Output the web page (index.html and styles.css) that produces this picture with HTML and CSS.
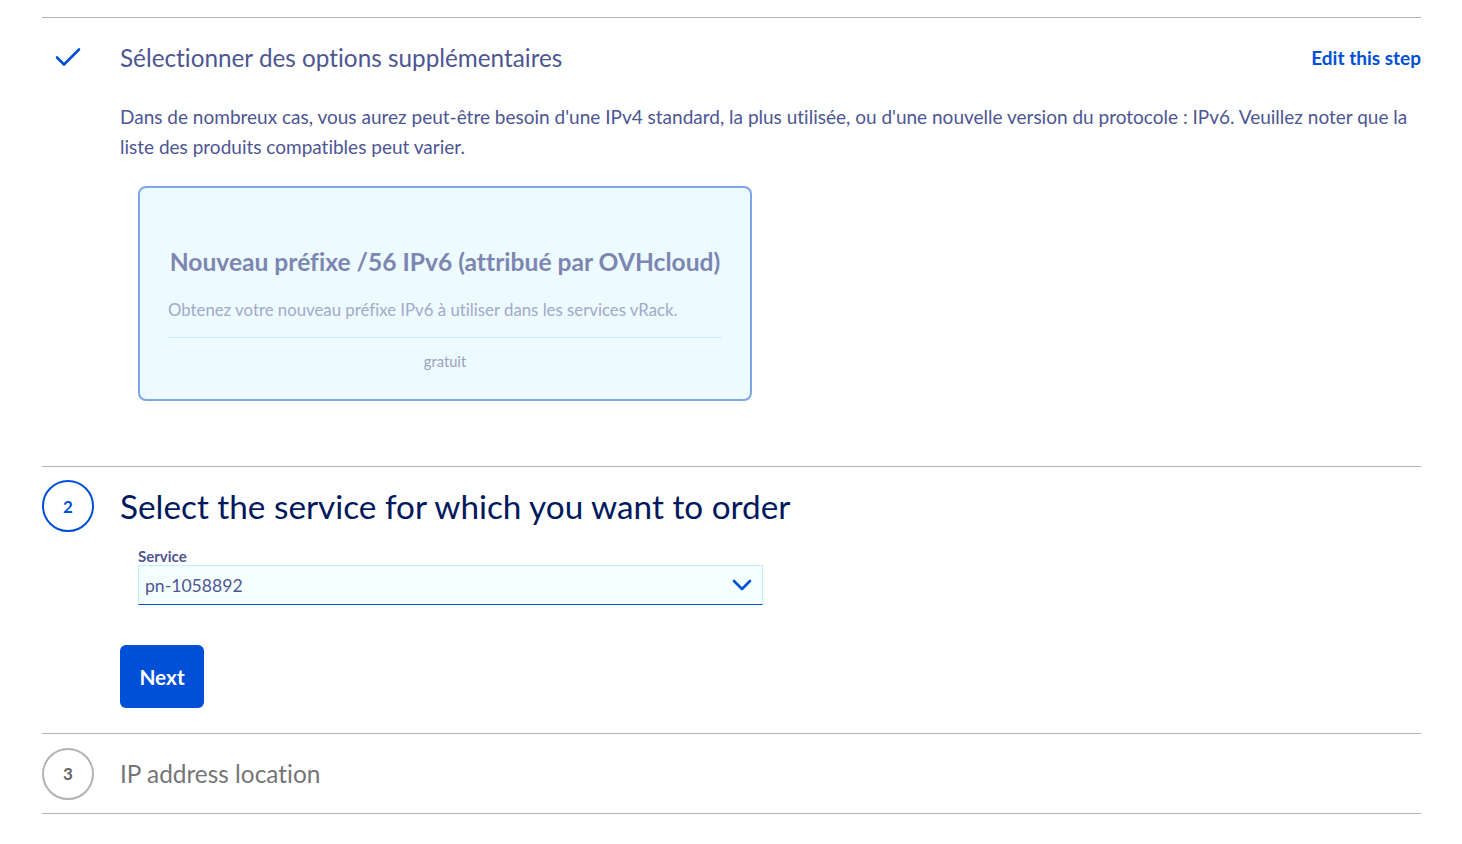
FILE: index.html
```html
<!DOCTYPE html>
<html lang="fr">
<head>
<meta charset="utf-8">
<title>Order</title>
<link rel="stylesheet" href="styles.css">
</head>
<body>
<div class="stepper">
  <section class="step step-done">
    <div class="step-head">
      <div class="step-icon">
        <svg width="28" height="22" viewBox="0 0 28 22"><path d="M3 10.5 L10 17.5 L25 2.5" fill="none" stroke="#0050d7" stroke-width="2.6" stroke-linecap="round" stroke-linejoin="round"/></svg>
      </div>
      <h2 class="step-title done-title">Sélectionner des options supplémentaires</h2>
      <a class="edit-link" href="#">Edit this step</a>
    </div>
    <div class="step-body">
      <p class="desc">Dans de nombreux cas, vous aurez peut-être besoin d'une IPv4 standard, la plus utilisée, ou d'une nouvelle version du protocole : IPv6. Veuillez noter que la liste des produits compatibles peut varier.</p>
      <div class="tile">
        <h3 class="tile-title">Nouveau préfixe /56 IPv6 (attribué par OVHcloud)</h3>
        <p class="tile-desc">Obtenez votre nouveau préfixe IPv6 à utiliser dans les services vRack.</p>
        <div class="tile-price">gratuit</div>
      </div>
    </div>
  </section>

  <section class="step step-active">
    <div class="step-head">
      <div class="step-icon"><span class="circle circle-active">2</span></div>
      <h2 class="step-title active-title">Select the service for which you want to order</h2>
    </div>
    <div class="step-body">
      <label class="field-label">Service</label>
      <div class="select">
        <span class="select-value">pn-1058892</span>
        <svg class="chev" width="20" height="14" viewBox="0 0 20 14"><path d="M2 3 L10 11 L18 3" fill="none" stroke="#0050d7" stroke-width="2.6" stroke-linecap="round" stroke-linejoin="round"/></svg>
      </div>
      <button class="btn">Next</button>
    </div>
  </section>

  <section class="step step-todo">
    <div class="step-head">
      <div class="step-icon"><span class="circle circle-todo">3</span></div>
      <h2 class="step-title todo-title">IP address location</h2>
    </div>
  </section>
</div>
</body>
</html>
```

FILE: styles.css
```css
* { box-sizing: border-box; }
html, body { margin: 0; padding: 0; background: #fff; }
body { font-family: "Lato", "Liberation Sans", sans-serif; color: #4d5693; font-variant-ligatures: no-common-ligatures; }

.stepper { padding: 17px 41px 0 42px; }
.step { border-top: 1px solid #b3b3b3; }
.step-todo { border-bottom: 1px solid #b3b3b3; }

.step-head { display: flex; align-items: center; }
.step-icon { width: 78px; flex: none; display: flex; align-items: center; }
.step-title { margin: 0; font-weight: 400; flex: 1; }

.step-done .step-head { height: 79px; }
.step-done .step-icon { padding-left: 12px; }
.done-title { font-size: 24.3px; color: #4d5693; }
.edit-link { color: #0050d7; font-weight: 700; font-size: 19px; text-decoration: none; }

.step-body { padding-left: 78px; }
.desc { margin: 5px 0 0; font-size: 19px; line-height: 30px; color: #4d5693; }

.tile { margin: 24px 0 65px 18px; width: 614px; height: 215px; border: 2px solid #7ea5e9; border-radius: 8px; background: #edfaff; padding: 0 28px; display: flex; flex-direction: column; align-items: center; }
.tile-title { margin: 58px 0 0; font-size: 24.6px; font-weight: 700; color: #7c86b0; line-height: 32px; }
.tile-desc { margin: 20px 0 0; align-self: stretch; font-size: 16.8px; line-height: 24px; color: #a2a9c9; padding-bottom: 15px; border-bottom: 1px solid #bfeefe; }
.tile-price { margin-top: 14px; font-size: 14.7px; color: #9a9fc0; }

.step-active .step-head { padding-top: 12px; height: 66px; }
.circle { width: 52px; height: 52px; border-radius: 50%; display: flex; align-items: center; justify-content: center; font-weight: 700; font-size: 17px; }
.circle-active { border: 2px solid #0050d7; color: #0050d7; }
.circle-todo { border: 2px solid #b3b3b3; color: #666; }
.active-title { font-size: 33.3px; color: #00185e; }

.field-label { display: block; margin: 14px 0 0 18px; font-size: 15px; font-weight: 700; color: #4d5693; line-height: 18px; }
.select { margin: 0 0 0 18px; width: 625px; height: 40px; background: #f5feff; border: 1px solid #bef1ff; border-bottom: 1px solid #0050d7; display: flex; align-items: center; justify-content: space-between; padding: 0 10px 0 6px; }
.select-value { font-size: 17.6px; color: #4d5693; }
.btn { margin: 40px 0 25px; display: block; width: 84px; height: 63px; border: 0; border-radius: 6px; background: #0050d7; color: #fff; font-family: inherit; font-weight: 700; font-size: 20.8px; }

.step-todo .step-head { height: 79px; }
.todo-title { font-size: 24.4px; color: #757575; }
```
